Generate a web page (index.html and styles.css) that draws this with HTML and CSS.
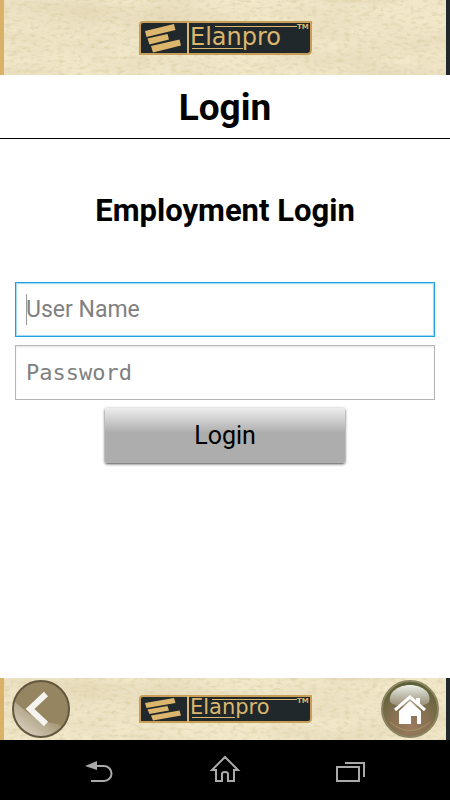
FILE: index.html
```html
<!DOCTYPE html>
<html lang="en">
<head>
  <meta charset="UTF-8">
  <title>Elanpro - Login</title>
  <meta name="viewport" content="width=device-width, initial-scale=1">
  <link rel="stylesheet" href="styles.css">
</head>
<body>
  <header class="banner top">
    <svg class="paper" aria-hidden="true">
      <filter id="blotch" x="0" y="0" width="100%" height="100%">
        <feTurbulence type="fractalNoise" baseFrequency="0.01 0.03" numOctaves="5" seed="8"/>
        <feColorMatrix values="0 0 0 0 0.8  0 0 0 0 0.71  0 0 0 0 0.5  2.4 0 0 0 -0.9"/>
      </filter>
      <filter id="grain" x="0" y="0" width="100%" height="100%">
        <feTurbulence type="fractalNoise" baseFrequency="0.15 0.3" numOctaves="4" seed="3"/>
        <feColorMatrix values="0 0 0 0 0.7  0 0 0 0 0.6  0 0 0 0 0.36  0 1.6 0 0 -0.75"/>
      </filter>
      <rect width="100%" height="100%" filter="url(#blotch)"/>
      <rect width="100%" height="100%" filter="url(#grain)"/>
    </svg>
    <svg class="logo" width="173" height="34" viewBox="0 0 173 34" role="img" aria-label="Elanpro">
      <path class="plate" d="M4 1H172V29Q172 33 168 33H1V4Q1 1 4 1Z"/>
      <path class="bar" d="M6 10L35 3L36.500 9L7.500 16ZM8.500 17.500L28.500 13L30 18.500L10.500 23.500ZM12 25L40.500 18.500L42 24.500L14 31.500Z"/>
      <path class="rule divider" d="M49 1V33"/>
      <path class="rule" d="M76 5.500H158M53 27.500H104"/>
      <text class="word" x="51" y="24">Elanpro</text>
      <text class="tm" x="158" y="8">TM</text>
    </svg>
  </header>

  <h1>Login</h1>

  <main>
    <h2>Employment Login</h2>
    <form>
      <div class="field active">
        <input type="text" id="user" placeholder="User Name" aria-label="User Name">
      </div>
      <div class="field">
        <input type="password" id="pass" placeholder="Password" aria-label="Password">
      </div>
      <button type="submit" class="login-btn">Login</button>
    </form>
  </main>

  <footer class="banner bottom">
    <svg class="paper" aria-hidden="true">
      <rect width="100%" height="100%" filter="url(#blotch)"/>
      <rect width="100%" height="100%" filter="url(#grain)"/>
    </svg>
    <button type="button" class="round-btn" aria-label="Back">
      <svg width="60" height="60" viewBox="0 0 60 60">
        <defs>
          <linearGradient id="shine" x1="0" y1="1" x2="0.7" y2="0.3">
            <stop offset="0" stop-color="#e8e2d6"/>
            <stop offset="1" stop-color="#a0916e"/>
          </linearGradient>
        </defs>
        <circle cx="30" cy="30" r="28" fill="#958560"/>
        <path d="M3 22C12 30 24 42 46 45C54 46 50 50 44 54A28 28 0 0 1 3 22Z" fill="url(#shine)"/>
        <circle cx="30" cy="30" r="28" fill="none" stroke="#64573f" stroke-width="2"/>
        <path d="M35 15L19 30L35 45" fill="none" stroke="#f5f3ef" stroke-width="6"/>
      </svg>
    </button>
    <svg class="logo" width="173" height="28" viewBox="0 0 173 28" role="img" aria-label="Elanpro">
      <path class="plate" d="M4 1H172V24Q172 27 168 27H1V4Q1 1 4 1Z"/>
      <path class="bar" d="M6 8L35 3L36.500 8L7.500 13ZM8.500 14.500L28.500 11L30 15.500L10.500 19ZM12 20.500L40.500 15.500L42 20.500L14 25.500Z"/>
      <path class="rule divider" d="M49 1V27"/>
      <path class="rule" d="M73 4.500H158M53 22.500H96"/>
      <text class="word small" x="51" y="19">Elanpro</text>
      <text class="tm" x="158" y="8">TM</text>
    </svg>
    <button type="button" class="round-btn" aria-label="Home">
      <svg width="60" height="60" viewBox="0 0 60 60">
        <defs>
          <radialGradient id="ball" cx="0.5" cy="0.8" r="0.75">
            <stop offset="0" stop-color="#9b7b60"/>
            <stop offset="0.5" stop-color="#84704f"/>
            <stop offset="1" stop-color="#5c6138"/>
          </radialGradient>
          <linearGradient id="gloss" x1="0" y1="0" x2="0" y2="1">
            <stop offset="0" stop-color="#fff" stop-opacity="0.9"/>
            <stop offset="1" stop-color="#fff" stop-opacity="0.2"/>
          </linearGradient>
        </defs>
        <circle cx="30" cy="30" r="28" fill="url(#ball)" stroke="#8c8662" stroke-width="2"/>
        <path d="M10 23C8 12 20 6 30 6S52 12 49 23C46 29 14 29 10 23Z" fill="url(#gloss)"/>
        <path d="M10 43Q30 60 50 43" fill="none" stroke="#a39264"/>
        <path d="M15 31L30 18L45 31" fill="none" stroke="#fff" stroke-width="3"/>
        <path d="M30 22L41 32V45H37V37H31V45H19V32ZM36 19H40V27L36 23Z" fill="#fff"/>
      </svg>
    </button>
  </footer>

  <nav class="system-nav">
    <button type="button" aria-label="System back">
      <svg width="32" height="32" viewBox="0 0 32 32">
        <path d="M10 11H20A7.500 7.500 0 0 1 20 26H7" class="line"/>
        <path d="M1 11L13 6V15Z" fill="#aaa"/>
      </svg>
    </button>
    <button type="button" aria-label="System home">
      <svg width="32" height="32" viewBox="0 0 32 32">
        <path d="M16 2L29 15H25V26H19V19Q19 17 16 17T13 19V26H7V15H3Z" class="line"/>
      </svg>
    </button>
    <button type="button" aria-label="Recent apps">
      <svg width="32" height="32" viewBox="0 0 32 32">
        <path d="M3 12H25V26H3ZM11 8H30V22" class="line"/>
      </svg>
    </button>
  </nav>
</body>
</html>
```
FILE: styles.css
```css
* {
  box-sizing: border-box;
}
body {
  margin: 0;
  min-height: 100vh;
  display: flex;
  flex-direction: column;
  background: #fff;
  color: #000;
  font-family: Roboto, sans-serif;
}
button {
  border: 0;
  padding: 0;
  background: none;
  cursor: pointer;
}
svg {
  display: block;
}
.banner {
  position: relative;
  display: flex;
  align-items: center;
  justify-content: center;
  background: #f1e8ca;
  border-left: 4px solid #d9b268;
  border-right: 4px solid #20282b;
}
.banner.top {
  height: 75px;
}
.banner.bottom {
  height: 62px;
  justify-content: space-between;
  padding: 0 6px 0 7px;
}
.paper {
  position: absolute;
  top: 0;
  left: 0;
  width: 100%;
  height: 100%;
}
.logo,
.round-btn {
  position: relative;
}
.plate {
  fill: #20282b;
  stroke: #c79f58;
  stroke-width: 2;
}
.bar {
  fill: #dcb66d;
}
.rule {
  fill: none;
  stroke: #dcb66d;
}
.divider {
  stroke-width: 2;
}
.word {
  fill: #dcb66d;
  font-family: "DejaVu Sans", sans-serif;
  font-size: 24px;
}
.word.small {
  font-size: 21px;
}
.tm {
  fill: #dcb66d;
  font-family: "DejaVu Sans", sans-serif;
  font-size: 7px;
  font-weight: bold;
}
h1 {
  margin: 0;
  padding-top: 2px;
  line-height: 61px;
  border-bottom: 1px solid #000;
  font-size: 37px;
  text-align: center;
}
main {
  flex: 1;
  padding: 48px 15px 0;
}
h2 {
  margin: 0 0 47px;
  font-size: 31px;
  line-height: 48px;
  text-align: center;
}
form {
  display: flex;
  flex-direction: column;
  align-items: center;
  gap: 8px;
}
.field {
  position: relative;
  width: 100%;
}
.field input {
  display: block;
  width: 100%;
  height: 55px;
  padding: 0 10px;
  border: 1px solid #b4b4b4;
  border-radius: 0;
  outline: 0;
  background: #fff;
  box-shadow: inset 0 2px 2px #eee;
  font: 23px Roboto, sans-serif;
}
.field input[type="password"] {
  font: 22px "DejaVu Sans Mono", monospace;
}
.field input::placeholder {
  color: #808080;
}
.field.active input {
  border-color: #1ba1dc;
  box-shadow: inset 0 0 0 1px #a5dbf3, inset 0 0 3px #ccc;
}
/* text cursor */
.field.active::after {
  content: "";
  position: absolute;
  left: 11px;
  top: 12px;
  width: 1px;
  height: 31px;
  background: #999;
}
.login-btn {
  width: 240px;
  height: 55px;
  border-radius: 2px;
  background: linear-gradient(#eee, #adadad 45%, #adadad);
  box-shadow: 0 1px 3px #444;
  font: 25px Roboto, sans-serif;
}
.system-nav {
  display: flex;
  align-items: flex-start;
  justify-content: center;
  gap: 93px;
  height: 60px;
  padding-top: 15px;
  background: #000;
}
.line {
  fill: none;
  stroke: #aaa;
  stroke-width: 2;
}
```
